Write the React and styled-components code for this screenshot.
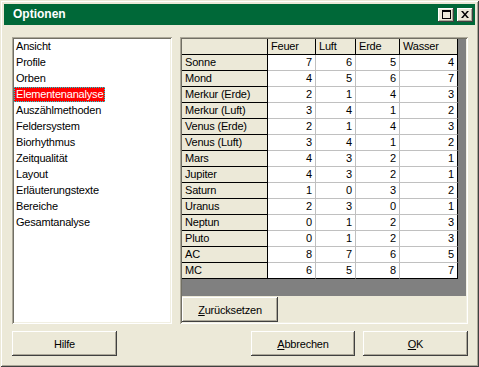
import React, { useState } from "react";
import styled, { createGlobalStyle } from "styled-components";

const GlobalStyle = createGlobalStyle`
  html, body {
    margin: 0;
    padding: 0;
    background: #ECE9D8;
  }
  body {
    font-family: "Liberation Sans", Arial, sans-serif;
    font-size: 11px;
    letter-spacing: -0.2px;
    color: #000;
  }
`;

const raised = `
  box-shadow: inset -1px -1px #404040, inset 1px 1px #fff,
    inset -2px -2px #ACA899, inset 2px 2px #ECE9D8;
`;

const sunken = `
  box-shadow: inset 1px 1px #ACA899, inset -1px -1px #fff,
    inset 2px 2px #716F64, inset -2px -2px #F1EFE2;
`;

const Window = styled.div`
  width: 479px;
  height: 367px;
  box-sizing: border-box;
  padding: 4px;
  background: #ECE9D8;
  display: flex;
  flex-direction: column;
  box-shadow: inset 1px 1px #ECE9D8, inset -1px -1px #404040,
    inset 2px 2px #fff, inset -2px -2px #ACA899;
`;

const TitleBar = styled.div`
  height: 21px;
  background: #006838;
  display: flex;
  align-items: center;
  justify-content: space-between;
  padding: 0 2px 0 9px;
`;

const Title = styled.span`
  color: #fff;
  font-weight: bold;
  font-size: 12px;
  letter-spacing: 0;
  margin-top: -2px;
`;

const TitleButtons = styled.div`
  display: flex;
  gap: 3px;
`;

const TitleButton = styled.div`
  width: 16px;
  height: 14px;
  background: #ECE9D8;
  display: flex;
  align-items: center;
  justify-content: center;
  ${raised}
`;

const Body = styled.div`
  flex: 1;
  padding: 12px 7px 0 8px;
  display: flex;
  flex-direction: column;
`;

const MainRow = styled.div`
  display: flex;
  gap: 8px;
  height: 287px;
`;

const ListBox = styled.div`
  width: 160px;
  box-sizing: border-box;
  background: #fff;
  padding: 1px 2px;
  ${sunken}
`;

const ListItem = styled.div`
  height: 16px;
  line-height: 16px;
  white-space: nowrap;
`;

const ItemLabel = styled.span`
  display: inline-block;
  height: 15px;
  line-height: 15px;
  padding: 0 2px;
  color: ${(p) => (p.$selected ? "#fff" : "#000")};
  background: ${(p) => (p.$selected ? "#FF0000" : "transparent")};
  outline: ${(p) => (p.$selected ? "1px dotted #00E0E0" : "none")};
  outline-offset: -1px;
`;

const GridPanel = styled.div`
  flex: 1;
  box-sizing: border-box;
  padding: 2px;
  display: flex;
  flex-direction: column;
  ${sunken}
`;

const GridArea = styled.div`
  flex: 1;
  background: #808080;
`;

const Grid = styled.div`
  display: grid;
  grid-template-columns: 86px 48px 40px 44px 58px;
  width: 276px;
  background: #fff;
`;

const Cell = styled.div`
  box-sizing: border-box;
  height: 16px;
  line-height: 15px;
  white-space: nowrap;
  overflow: hidden;
  border-right: 1px solid ${(p) => (p.$fixed || p.$lastCol ? "#000" : "#C0C0C0")};
  border-bottom: 1px solid ${(p) => (p.$fixed || p.$lastRow ? "#000" : "#C0C0C0")};
  background: ${(p) => (p.$fixed ? "#ECE9D8" : "#fff")};
  text-align: ${(p) => (p.$num ? "right" : "left")};
  padding: ${(p) => (p.$num ? "0 3px 0 0" : "0 0 0 3px")};
`;

const ButtonRow = styled.div`
  padding-top: 1px;
  display: flex;
`;

const Button = styled.div`
  width: ${(p) => p.$w || 105}px;
  height: 25px;
  box-sizing: border-box;
  background: #ECE9D8;
  display: flex;
  align-items: center;
  justify-content: center;
  ${raised}
`;

const Footer = styled.div`
  margin-top: 7px;
  display: flex;
  align-items: center;
  gap: 8px;
`;

const Spacer = styled.div`
  flex: 1;
`;

const sections = [
  "Ansicht",
  "Profile",
  "Orben",
  "Elementenanalyse",
  "Auszählmethoden",
  "Feldersystem",
  "Biorhythmus",
  "Zeitqualität",
  "Layout",
  "Erläuterungstexte",
  "Bereiche",
  "Gesamtanalyse",
];

const columns = ["Feuer", "Luft", "Erde", "Wasser"];

const rows = [
  ["Sonne", 7, 6, 5, 4],
  ["Mond", 4, 5, 6, 7],
  ["Merkur (Erde)", 2, 1, 4, 3],
  ["Merkur (Luft)", 3, 4, 1, 2],
  ["Venus (Erde)", 2, 1, 4, 3],
  ["Venus (Luft)", 3, 4, 1, 2],
  ["Mars", 4, 3, 2, 1],
  ["Jupiter", 4, 3, 2, 1],
  ["Saturn", 1, 0, 3, 2],
  ["Uranus", 2, 3, 0, 1],
  ["Neptun", 0, 1, 2, 3],
  ["Pluto", 0, 1, 2, 3],
  ["AC", 8, 7, 6, 5],
  ["MC", 6, 5, 8, 7],
];

const Options = () => {
  const [selected, setSelected] = useState("Elementenanalyse");

  return (
    <Window>
      <GlobalStyle />
      <TitleBar>
        <Title>Optionen</Title>
        <TitleButtons>
          <TitleButton>
            <svg width="9" height="9" viewBox="0 0 9 9">
              <rect x="0.5" y="0.5" width="8" height="8" fill="none" stroke="#000" />
              <rect x="0" y="0" width="9" height="2" fill="#000" />
            </svg>
          </TitleButton>
          <TitleButton>
            <svg width="8" height="7" viewBox="0 0 8 7">
              <path d="M0 0h2l2 2.5L6 0h2L5 3.5 8 7H6L4 4.5 2 7H0l3-3.5z" fill="#000" />
            </svg>
          </TitleButton>
        </TitleButtons>
      </TitleBar>
      <Body>
        <MainRow>
          <ListBox>
            {sections.map((s) => (
              <ListItem key={s} onClick={() => setSelected(s)}>
                <ItemLabel $selected={selected === s}>{s}</ItemLabel>
              </ListItem>
            ))}
          </ListBox>
          <GridPanel>
            <GridArea>
              <Grid>
                <Cell $fixed />
                {columns.map((c) => (
                  <Cell key={c} $fixed>
                    {c}
                  </Cell>
                ))}
                {rows.map((r, ri) =>
                  r.map((v, ci) =>
                    ci === 0 ? (
                      <Cell key={ri + "-" + ci} $fixed>
                        {v}
                      </Cell>
                    ) : (
                      <Cell
                        key={ri + "-" + ci}
                        $num
                        $lastCol={ci === r.length - 1}
                        $lastRow={ri === rows.length - 1}
                      >
                        {v}
                      </Cell>
                    )
                  )
                )}
              </Grid>
            </GridArea>
            <ButtonRow>
              <Button $w={96}>
                <u>Z</u>urücksetzen
              </Button>
            </ButtonRow>
          </GridPanel>
        </MainRow>
        <Footer>
          <Button>Hilfe</Button>
          <Spacer />
          <Button $w={104}>
            <u>A</u>bbrechen
          </Button>
          <Button>
            <u>O</u>K
          </Button>
        </Footer>
      </Body>
    </Window>
  );
};

export default Options;
